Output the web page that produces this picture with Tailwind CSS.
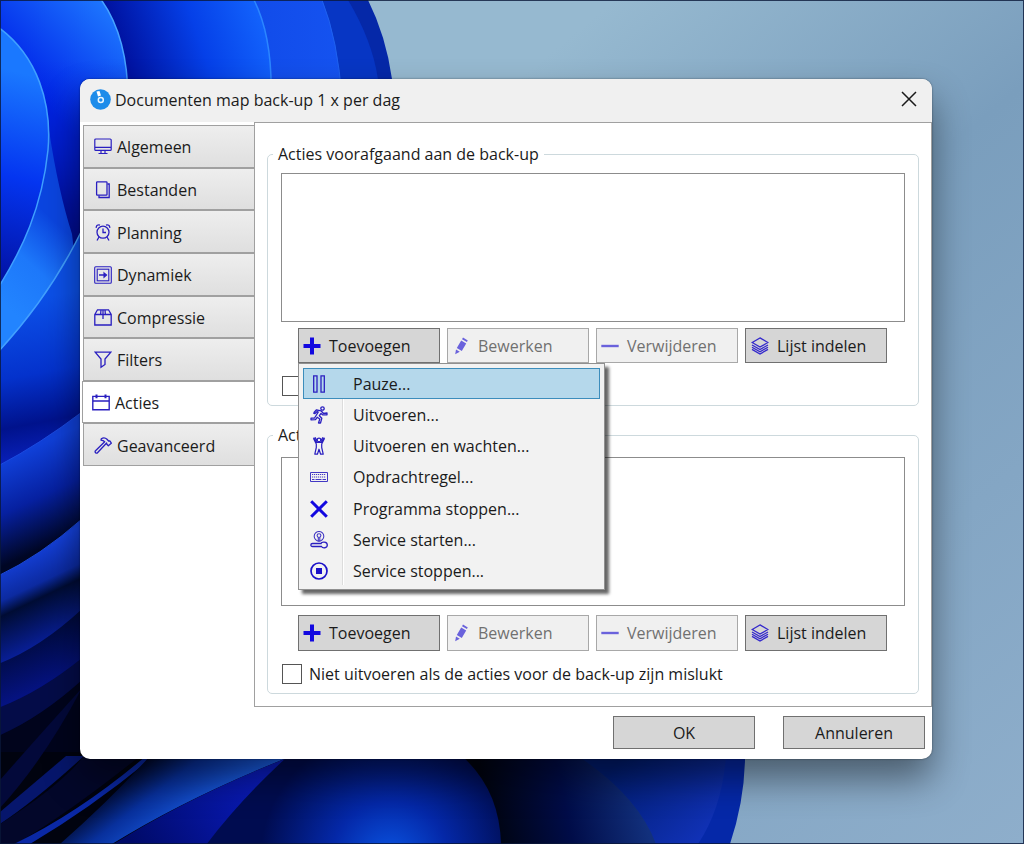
<!doctype html>
<html lang="nl">
<head>
<meta charset="UTF-8">
<meta name="viewport" content="width=device-width, initial-scale=1">
<title>Documenten map back-up 1 x per dag</title>
<script src="https://cdn.jsdelivr.net/npm/@tailwindcss/browser@4"></script>
</head>
<body class="font-['Open_Sans','Noto_Sans',sans-serif] text-base leading-6 text-[#1b1b1b]">
<div class="relative min-h-screen overflow-hidden pt-[79px] pr-[92px] pb-[85px] pl-20">

	<!-- wallpaper -->
	<svg class="absolute inset-0 h-full w-full" viewBox="0 0 1024 844" preserveAspectRatio="xMidYMid slice" aria-hidden="true">
		<defs>
			<linearGradient id="sky" x1="0" y1="0" x2="1" y2="1"><stop offset="0.3" stop-color="#96b9d0"/><stop offset="0.55" stop-color="#7a9ebd"/><stop offset="1" stop-color="#8eaecb"/></linearGradient>
			<linearGradient id="p1" x1="0" y1="0" x2="1" y2="0"><stop offset="0" stop-color="#0636d8"/><stop offset="1" stop-color="#1553f0"/></linearGradient>
			<linearGradient id="p2" gradientUnits="userSpaceOnUse" x1="125" y1="60" x2="270" y2="10"><stop offset="0" stop-color="#0012a0"/><stop offset="0.5" stop-color="#0540e8"/><stop offset="1" stop-color="#1568ff"/></linearGradient>
			<linearGradient id="p3" gradientUnits="userSpaceOnUse" x1="30" y1="90" x2="115" y2="10"><stop offset="0" stop-color="#0024e8"/><stop offset="1" stop-color="#1e78ff"/></linearGradient>
			<linearGradient id="p3d" x1="0" y1="0" x2="0" y2="1"><stop offset="0" stop-color="#0024e0" stop-opacity="0"/><stop offset="0.6" stop-color="#0010a0"/><stop offset="1" stop-color="#00025c"/></linearGradient>
			<linearGradient id="p4" gradientUnits="userSpaceOnUse" x1="0" y1="280" x2="50" y2="80"><stop offset="0" stop-color="#0212a4"/><stop offset="0.5" stop-color="#0435f0"/><stop offset="1" stop-color="#1a78ff"/></linearGradient>
			<linearGradient id="p5" gradientUnits="userSpaceOnUse" x1="10" y1="310" x2="75" y2="240"><stop offset="0" stop-color="#2284ff"/><stop offset="0.5" stop-color="#1d78fa"/><stop offset="1" stop-color="#0b45e0"/></linearGradient>
			<linearGradient id="p6" gradientUnits="userSpaceOnUse" x1="30" y1="300" x2="60" y2="460"><stop offset="0" stop-color="#0c50e8"/><stop offset="0.45" stop-color="#0432cc"/><stop offset="0.75" stop-color="#00128c"/><stop offset="1" stop-color="#0a22c0"/></linearGradient>
			<linearGradient id="p7" gradientUnits="userSpaceOnUse" x1="20" y1="454" x2="60" y2="540"><stop offset="0" stop-color="#1040d8"/><stop offset="0.5" stop-color="#0620a0"/><stop offset="1" stop-color="#000624"/></linearGradient>
			<linearGradient id="p8" gradientUnits="userSpaceOnUse" x1="20" y1="556" x2="60" y2="640"><stop offset="0" stop-color="#1440d8"/><stop offset="0.35" stop-color="#0c2aa0"/><stop offset="0.5" stop-color="#000c34"/><stop offset="1" stop-color="#0920a0"/></linearGradient>
			<linearGradient id="p9" gradientUnits="userSpaceOnUse" x1="20" y1="640" x2="50" y2="710"><stop offset="0" stop-color="#000a3c"/><stop offset="1" stop-color="#0716a0"/></linearGradient>
			<linearGradient id="p10" gradientUnits="userSpaceOnUse" x1="125" y1="775" x2="175" y2="840"><stop offset="0" stop-color="#000624"/><stop offset="0.4" stop-color="#08309c"/><stop offset="1" stop-color="#1b62ec"/></linearGradient>
			<linearGradient id="p11" gradientUnits="userSpaceOnUse" x1="130" y1="840" x2="260" y2="770"><stop offset="0" stop-color="#000a68"/><stop offset="1" stop-color="#0a1cc0"/></linearGradient>
			<radialGradient id="p12" gradientUnits="userSpaceOnUse" cx="390" cy="860" r="130"><stop offset="0" stop-color="#0a56e4"/><stop offset="0.45" stop-color="#0428a8"/><stop offset="1" stop-color="#000c50"/></radialGradient>
			<linearGradient id="p13" gradientUnits="userSpaceOnUse" x1="490" y1="820" x2="640" y2="790"><stop offset="0" stop-color="#000410"/><stop offset="0.5" stop-color="#000c48"/><stop offset="1" stop-color="#12307c"/></linearGradient>
			<linearGradient id="p14" gradientUnits="userSpaceOnUse" x1="620" y1="760" x2="700" y2="844"><stop offset="0" stop-color="#001c70"/><stop offset="1" stop-color="#1132b8"/></linearGradient>
		</defs>
		<path fill="url(#sky)" d="M0 0H1024V844H0z"/>
		<path fill="#0528a8" d="M0 0H368Q386 36 392 79V420H700Q752 640 745 760Q744 802 730 844H0z"/>
		<path fill="#0736c4" d="M0 0H348Q372 40 378 79V100H0z"/>
		<path fill="url(#p1)" stroke="#1f62f0" d="M0 0H322Q338 40 342 100H0z"/>
		<path fill="url(#p2)" stroke="#2b86ff" stroke-width="1.5" d="M0-2H253Q273 36 271 100H0z"/>
		<path fill="#000b88" d="M0 0H102V760H0z"/>
		<path fill="url(#p3)" stroke="#46a4ff" stroke-width="1.5" d="M-2-2H100Q128 36 128 100V300H-2z"/>
		<path fill="url(#p3d)" d="M0 60H128V300H0z"/>
		<path fill="url(#p5)" d="M49 130Q58 190 72 234L80 300L0 360V280z"/>
		<path fill="url(#p4)" stroke="#3fa0ff" stroke-width="1.5" d="M-2 27C38 56 52 104 48 150C42 208 22 250-2 288z"/>
		<path fill="url(#p6)" stroke="#42a0ff" stroke-width="1.5" d="M82 230Q50 296-2 352V480H82z"/>
		<path fill="url(#p7)" stroke="#1a4ae0" d="M82 412Q40 444-2 466V600H82z"/>
		<path fill="url(#p8)" stroke="#1a48d8" d="M82 519Q40 556-2 576V680H82z"/>
		<path fill="url(#p9)" d="M82 609Q40 648-2 664V760H82z"/>
		<path fill="#040c48" d="M82 658Q40 692-2 708V780H82z"/>
		<path fill="#01041c" d="M82 680Q40 718-2 736V844H82z"/>
		<path fill="#01030f" d="M0 752H480V844H0z"/>
		<path fill="#03093a" d="M82 688Q44 760 0 808V780Q44 730 82 688z"/>
		<path fill="#06166c" d="M84 756Q36 800 0 824V812L66 756z"/>
		<path fill="#03072a" d="M0 824Q60 786 84 756H140Q70 812 16 844H0z"/>
		<path fill="#0a28a4" d="M146 756Q80 812 14 844H30Q94 806 154 756z"/>
		<path fill="url(#p10)" d="M150 756Q110 800 60 844H112Q190 796 292 756z"/>
		<path fill="url(#p11)" d="M292 756Q190 796 112 845H208L292 756z"/>
		<path fill="#01030f" d="M440 756H600V844H440z"/>
		<path fill="url(#p13)" d="M460 756H590Q646 796 656 844H498z"/>
		<path fill="url(#p12)" d="M288 756Q240 800 206 845H501Q500 790 462 756z"/>
		<path fill="url(#p14)" d="M578 756H726Q722 808 698 844H656Q638 796 578 756z"/>
		<path fill="none" stroke="#0a1838" stroke-opacity="0.8" stroke-width="2" d="M0 0H1024V844H0z"/>
	</svg>

	<main class="relative flex flex-col overflow-hidden rounded-[10px] bg-white shadow-[0_20px_36px_rgba(0,0,0,0.45),0_0_2px_rgba(0,0,0,0.5)]">
		<header class="flex h-[43px] items-center bg-[#f0f0f0] pr-[11px] pb-0.5 pl-[10px]">
			<svg class="size-[21px] shrink-0" viewBox="0 0 21 21" aria-hidden="true">
				<circle cx="10.5" cy="10.5" r="10.3" fill="#1d8cea"/>
				<path d="M6.5 2.5L9.5 2L11 6.5L8 7.5z" fill="#fff"/>
				<circle cx="10.8" cy="11" r="2.5" fill="none" stroke="#e8f6ff" stroke-width="1.5"/>
			</svg>
			<h1 class="ml-1 flex-1">Documenten map back-up 1 x per dag</h1>
			<button type="button" aria-label="Sluiten" class="flex size-6 items-center justify-center">
				<svg class="mb-0.5 size-4" viewBox="0 0 16 16" fill="none" stroke="#1a1a1a" stroke-width="1.5"><path d="M1 1L15 15M15 1L1 15"/></svg>
			</button>
		</header>

		<div class="flex">
			<!-- tabs -->
			<nav class="w-[174px] shrink-0 pt-[3px] pl-[3px]">
				<div class="grid h-[341px] auto-rows-fr" role="tablist">
					<button type="button" role="tab" class="flex items-center gap-[5px] border border-r-0 border-[#a0a0a0] bg-linear-to-b from-[#eeeeee] to-[#dfdfdf] pt-0.5 pl-[10px]">
						<svg class="size-[18px]" viewBox="0 0 18 18" fill="none" stroke="#2a1fc0" stroke-width="1.2"><rect x="0.8" y="1" width="16.4" height="11.4" rx="1"/><path d="M1 9.4H17M7 12.2V15.2M11 12.2V15.2M4.5 15.5H13.5"/></svg>
						Algemeen
					</button>
					<button type="button" role="tab" class="flex items-center gap-[5px] border border-r-0 border-[#a0a0a0] bg-linear-to-b from-[#eeeeee] to-[#dfdfdf] pt-0.5 pl-[10px]">
						<svg class="size-[18px]" viewBox="0 0 18 18" fill="none" stroke="#2a1fc0" stroke-width="1.3"><rect x="2.6" y="0.8" width="10.4" height="13.4" rx="0.8"/><path d="M13.5 3H15.2V16.5H5V14.5"/></svg>
						Bestanden
					</button>
					<button type="button" role="tab" class="flex items-center gap-[5px] border border-r-0 border-[#a0a0a0] bg-linear-to-b from-[#eeeeee] to-[#dfdfdf] pt-0.5 pl-[10px]">
						<svg class="size-[18px]" viewBox="0 0 18 18" fill="none" stroke="#2a1fc0" stroke-width="1.3"><circle cx="9" cy="8.2" r="6"/><path d="M9 4.5V8.5H12M5 13L3 16.5M13 13L15 16.5M2.3 3.9C2 1.5 4 .3 6 1.1M15.7 3.9C16 1.5 14 .3 12 1.1"/></svg>
						Planning
					</button>
					<button type="button" role="tab" class="flex items-center gap-[5px] border border-r-0 border-[#a0a0a0] bg-linear-to-b from-[#eeeeee] to-[#dfdfdf] pt-0.5 pl-[10px]">
						<svg class="size-[18px]" viewBox="0 0 18 18" fill="none" stroke="#2a1fc0" stroke-width="1.1"><rect x="0.7" y="0.7" width="16.6" height="16.6" rx="1"/><rect x="3.2" y="3.2" width="11.6" height="11.6"/><path stroke-width="1.5" d="M5 9H11"/><path fill="#2a1fc0" d="M10 6.8L12.6 9L10 11.2z"/></svg>
						Dynamiek
					</button>
					<button type="button" role="tab" class="flex items-center gap-[5px] border border-r-0 border-[#a0a0a0] bg-linear-to-b from-[#eeeeee] to-[#dfdfdf] pt-0.5 pl-[10px]">
						<svg class="size-[18px]" viewBox="0 0 18 18" fill="none" stroke="#2a1fc0" stroke-width="1.3"><path d="M.8 5.5L3.5 .8H14.5L17.2 5.5V16H.8zM.8 5.5H17.2M9 .8V10M7 .8L6.6 5.5M11 .8L11.4 5.5"/></svg>
						Compressie
					</button>
					<button type="button" role="tab" class="flex items-center gap-[5px] border border-r-0 border-[#a0a0a0] bg-linear-to-b from-[#eeeeee] to-[#dfdfdf] pt-0.5 pl-[10px]">
						<svg class="size-[18px]" viewBox="0 0 18 18" fill="none" stroke="#2a1fc0" stroke-width="1.3"><path d="M1.2 1.2H16.8L11 8V13.5L7 16.3V8z"/></svg>
						Filters
					</button>
					<button type="button" role="tab" aria-selected="true" class="-ml-px flex items-center gap-[5px] border border-r-0 border-[#a0a0a0] bg-white pt-0.5 pl-[9px]">
						<svg class="size-[18px]" viewBox="0 0 18 18" fill="none" stroke="#2a1fc0" stroke-width="1.4"><path d="M.8 2.4H17.2V15.7H.8zM.8 7H17.2"/><path stroke-width="2" d="M4.5 .5V4.2M13.5 .5V4.2"/></svg>
						Acties
					</button>
					<button type="button" role="tab" class="flex items-center gap-[5px] border border-r-0 border-[#a0a0a0] bg-linear-to-b from-[#eeeeee] to-[#dfdfdf] pt-0.5 pl-[10px]">
						<svg class="size-[18px]" viewBox="0 0 18 18" fill="none" stroke="#2a1fc0" stroke-width="1.3" stroke-linejoin="round"><path d="M7.3 1.8C9.5 .3 11.5 .8 13 2.3L14.6 4H16L17.3 6.2L14.3 8.7L12.9 7.3L12.6 6L3.5 15.8C2.5 17 .2 15 1.5 13.8L10.7 4.8L9 3.6L7 3.2z"/></svg>
						Geavanceerd
					</button>
				</div>
			</nav>

			<!-- panel -->
			<section class="min-w-0 flex-1 border border-[#a0a0a0] px-3 pt-[19px] pb-3">
				<fieldset class="min-w-0 rounded-[5px] border border-[#cdd9dd] px-[13px] pb-[9px]">
					<legend class="-ml-2 px-[5px]">Acties voorafgaand aan de back-up</legend>
					<div class="mt-[7px] h-[149px] border border-[#8c8c8c]" role="listbox" aria-label="Acties voorafgaand aan de back-up"></div>
					<div class="mt-[6px] mr-[18px] ml-[17px] grid grid-cols-4 gap-[7px]">
						<div class="relative">
							<button type="button" aria-haspopup="menu" aria-expanded="true" class="flex h-[35px] w-full items-center gap-2 border border-[#707070] bg-[#d6d6d6] pl-1">
								<svg class="size-[18px]" viewBox="0 0 18 18" fill="#1208e0"><path d="M7 .5H11V7H17.5V11H11V17.5H7V11H.5V7H7z"/></svg>
								Toevoegen
							</button>
							<div role="menu" class="absolute top-full left-0 z-10 w-[307px] border border-[#909090] bg-[#f2f2f2] px-1 pt-1 pb-0.5 shadow-[4px_4px_3px_rgba(0,0,0,0.6)]">
								<div class="absolute inset-y-1 left-[43px] w-0.5 border-l border-[#dcdcdc] bg-white"></div>
								<div class="grid h-[219px] auto-rows-fr">
									<button type="button" role="menuitem" class="relative flex items-center gap-[25px] border border-[#3c8dbc] bg-[#b5d8eb] pl-[6px]">
										<svg class="size-[18px]" viewBox="0 0 18 18" fill="none" stroke="#2a1fc0" stroke-width="1.3"><path d="M3.7 .8H7V17.2H3.7zM11 .8H14.3V17.2H11z"/></svg>
										Pauze...
									</button>
									<button type="button" role="menuitem" class="flex items-center gap-[25px] border border-transparent pl-[6px]">
										<svg class="size-[18px]" viewBox="0 0 18 18" fill="none" stroke="#2a1fc0" stroke-width="1.3" stroke-linejoin="round" stroke-linecap="round"><circle cx="12.5" cy="2.5" r="1.7"/><path d="M4 6.5L6.5 3.8L11 4.8L13.3 7.3L17 7M3.8 7.3L5 7.5L7.2 5.5L8.3 6L5.8 10L4.5 12L1 12.2V13.8L5.5 13.7L7.2 11.3L9.8 13L8.5 17H10.5L11.8 12.3L9.3 9.7L11 7.5L12.5 8.8H17V7.3"/></svg>
										Uitvoeren...
									</button>
									<button type="button" role="menuitem" class="flex items-center gap-[25px] border border-transparent pl-[6px]">
										<svg class="size-[18px]" viewBox="0 0 18 18" fill="none" stroke="#2a1fc0" stroke-width="1.2" stroke-linejoin="round"><circle cx="9" cy="2.9" r="1.8"/><path d="M3.6 .6L6.8 5.4H11.2L14.4 .6M5 .3L7.4 4M13 .3L10.6 4M3.4 1.2L6.3 7V10.5L4.8 17.2H7.4L9 12.2L10.6 17.2H13.2L11.7 10.5V7L14.6 1.2"/></svg>
										Uitvoeren en wachten...
									</button>
									<button type="button" role="menuitem" class="flex items-center gap-[25px] border border-transparent pl-[6px]">
										<svg class="size-[18px]" viewBox="0 0 18 18" fill="none" stroke="#4238c4"><path d="M.5 4.5H17.5V13.5H.5z"/><path stroke-width="1.2" stroke-dasharray="1.2 0.8" d="M2 6.5H16M2 9H16"/><path stroke-width="1.2" d="M2 11.5H4.5M5.5 11.5H11.5M12.5 11.5H16"/></svg>
										Opdrachtregel...
									</button>
									<button type="button" role="menuitem" class="flex items-center gap-[25px] border border-transparent pl-[6px]">
										<svg class="size-[18px]" viewBox="0 0 18 18" fill="none" stroke="#1208e0" stroke-width="3"><path d="M1.2 1.2L16.8 16.8M16.8 1.2L1.2 16.8"/></svg>
										Programma stoppen...
									</button>
									<button type="button" role="menuitem" class="flex items-center gap-[25px] border border-transparent pl-[6px]">
										<svg class="size-[18px]" viewBox="0 0 18 18" fill="none" stroke="#4238c4" stroke-width="1.1"><circle cx="9" cy="5.3" r="4.8"/><circle cx="9" cy="4.6" r="1.9"/><path d="M8.3 6.5V10.5M9.8 6.5V10.5"/><path stroke="#2a1fc0" stroke-width="1.3" d="M2.5 12.5H11C11.5 10.5 17.3 10.3 17.3 14C17.3 17.5 12.5 17.3 11.5 15.5H2.5C.3 15.5 .3 12.5 2.5 12.5z"/></svg>
										Service starten...
									</button>
									<button type="button" role="menuitem" class="flex items-center gap-[25px] border border-transparent pl-[6px]">
										<svg class="size-[18px]" viewBox="0 0 18 18" fill="none" stroke="#1a10c8" stroke-width="1.7"><circle cx="9" cy="9" r="8"/><path fill="#1a10c8" stroke="none" d="M6 6H12V12H6z"/></svg>
										Service stoppen...
									</button>
								</div>
							</div>
						</div>
						<button type="button" disabled class="flex h-[35px] items-center gap-2 border border-[#a8a8a8] bg-[#f0f0f0] pl-1 text-[#707070]">
							<svg class="size-[18px]" viewBox="0 0 18 18" fill="#6a62dc"><path d="M9.2 3.4L14.2 6.4L9.8 14L4.8 11zM10 2.2L11 .6L15.8 3.5L14.9 5.1zM4 12.4L7.8 14.7L3.2 17.3z"/></svg>
							Bewerken
						</button>
						<button type="button" disabled class="flex h-[35px] items-center gap-2 border border-[#a8a8a8] bg-[#f0f0f0] pl-1 text-[#707070]">
							<svg class="size-[18px]" viewBox="0 0 18 18" fill="#6a62dc"><path d="M.3 7.8H17.7V10.2H.3z"/></svg>
							Verwijderen
						</button>
						<button type="button" class="flex h-[35px] items-center gap-2 border border-[#707070] bg-[#d6d6d6] pl-[5px]">
							<svg class="size-[18px]" viewBox="0 0 18 18" fill="none" stroke="#3328cc" stroke-width="1.3"><path d="M9 .9L16.8 5.5L9 10.1L1.2 5.5zM1 8L9 12.5L17 8M1 10.2L9 14.7L17 10.2M1 12.4L9 17L17 12.4"/></svg>
							Lijst indelen
						</button>
					</div>
					<div class="mt-[13px] flex h-5 items-center pl-px">
						<input type="checkbox" aria-label="Optie voor acties vooraf" class="size-5 appearance-none border border-[#555555] bg-white">
					</div>
				</fieldset>

				<fieldset class="mt-[17px] min-w-0 rounded-[5px] border border-[#cdd9dd] px-[13px] pb-[9px]">
					<legend class="-ml-2 px-[5px]">Acties</legend>
					<div class="mt-[10px] h-[149px] border border-[#8c8c8c]" role="listbox" aria-label="Acties na de back-up"></div>
					<div class="mt-[9px] mr-[18px] ml-[17px] grid grid-cols-4 gap-[7px]">
						<button type="button" class="flex h-9 items-center gap-2 border border-[#707070] bg-[#d6d6d6] pl-1">
							<svg class="size-[18px]" viewBox="0 0 18 18" fill="#1208e0"><path d="M7 .5H11V7H17.5V11H11V17.5H7V11H.5V7H7z"/></svg>
							Toevoegen
						</button>
						<button type="button" disabled class="flex h-9 items-center gap-2 border border-[#a8a8a8] bg-[#f0f0f0] pl-1 text-[#707070]">
							<svg class="size-[18px]" viewBox="0 0 18 18" fill="#6a62dc"><path d="M9.2 3.4L14.2 6.4L9.8 14L4.8 11zM10 2.2L11 .6L15.8 3.5L14.9 5.1zM4 12.4L7.8 14.7L3.2 17.3z"/></svg>
							Bewerken
						</button>
						<button type="button" disabled class="flex h-9 items-center gap-2 border border-[#a8a8a8] bg-[#f0f0f0] pl-1 text-[#707070]">
							<svg class="size-[18px]" viewBox="0 0 18 18" fill="#6a62dc"><path d="M.3 7.8H17.7V10.2H.3z"/></svg>
							Verwijderen
						</button>
						<button type="button" class="flex h-9 items-center gap-2 border border-[#707070] bg-[#d6d6d6] pl-[5px]">
							<svg class="size-[18px]" viewBox="0 0 18 18" fill="none" stroke="#3328cc" stroke-width="1.3"><path d="M9 .9L16.8 5.5L9 10.1L1.2 5.5zM1 8L9 12.5L17 8M1 10.2L9 14.7L17 10.2M1 12.4L9 17L17 12.4"/></svg>
							Lijst indelen
						</button>
					</div>
					<div class="mt-[13px] flex h-5 items-center gap-[7px] pl-px">
						<input id="skip" type="checkbox" class="size-5 appearance-none border border-[#555555] bg-white">
						<label for="skip">Niet uitvoeren als de acties voor de back-up zijn mislukt</label>
					</div>
				</fieldset>
			</section>
		</div>

		<footer class="flex justify-end gap-7 pt-[9px] pr-[7px] pb-[10px]">
			<button type="button" class="h-[33px] w-[142px] border border-[#707070] bg-[#d6d6d6]">OK</button>
			<button type="button" class="h-[33px] w-[142px] border border-[#707070] bg-[#d6d6d6]">Annuleren</button>
		</footer>
	</main>
</div>
</body>
</html>
